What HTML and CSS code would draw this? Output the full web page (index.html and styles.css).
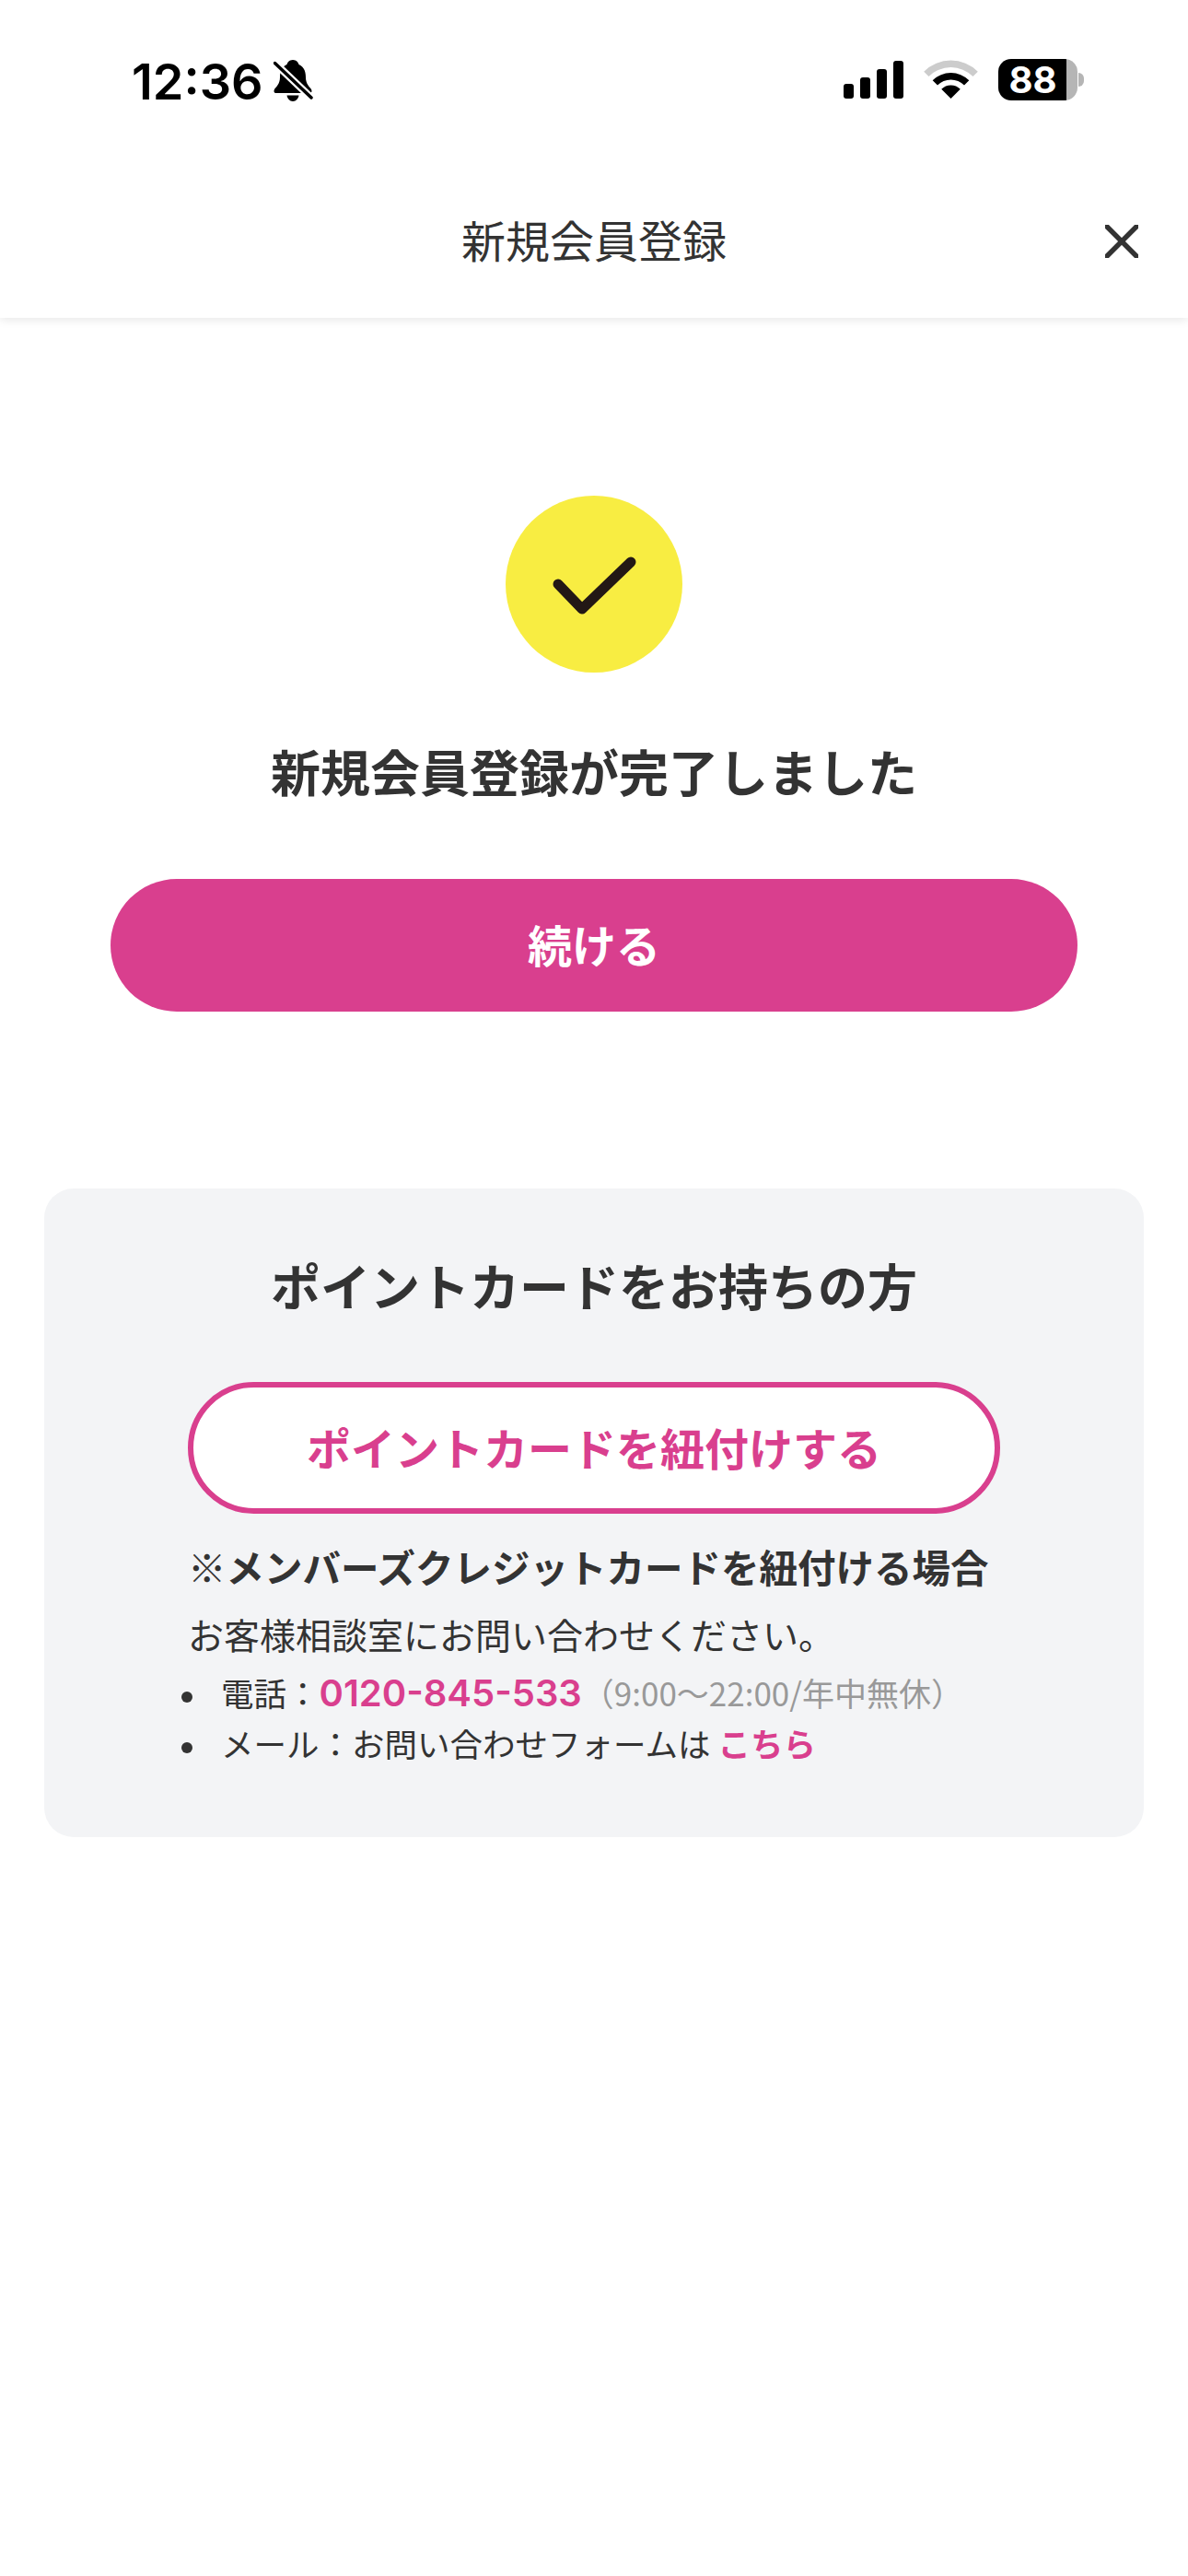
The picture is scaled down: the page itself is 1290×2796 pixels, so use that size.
FILE: index.html
```html
<!DOCTYPE html>
<html lang="ja">
<head>
    <meta charset="UTF-8">
    <meta name="viewport" content="width=device-width, initial-scale=1.0">
    <title>新規会員登録</title>
    <link rel="stylesheet" href="styles.css">
</head>
<body>
    <header class="header">
        <div class="status-bar">
            <div class="status-left">
                <span class="clock">12:36</span>
                <svg class="bell" width="43" height="46" viewBox="0 0 43 46">
                    <path d="M21 0C17 0 15 3 14.5 5C8 8 7 14 7 19C7 26 3 29 1 32C0 34 .5 36 3 36L39 36C41.5 36 42 34 41 32C39 29 35 26 35 19C35 14 34 8 27.5 5C27 3 25 0 21 0Z"/>
                    <path d="M14.5 38.5H27.5C27 42 24.5 45 21 45C17.5 45 15 42 14.5 38.5Z"/>
                    <path d="M1 3L41 41" stroke="#fff" stroke-width="8"/>
                    <path d="M1.5 3.5L41 41" stroke="#000" stroke-width="3.5" stroke-linecap="round"/>
                </svg>
            </div>
            <div class="status-right">
                <div class="signal">
                    <span class="bar bar-1"></span>
                    <span class="bar bar-2"></span>
                    <span class="bar bar-3"></span>
                    <span class="bar bar-4"></span>
                </div>
                <svg class="wifi" width="57" height="42" viewBox="0 0 57 42">
                    <path fill="#ccc" d="M-.8 12.7A41.5 41.5 0 0 1 57.8 12.7L52.5 18A34 34 0 0 0 4.5 18Z"/>
                    <path d="M8.7 22.2A28 28 0 0 1 48.3 22.2L43 27.5A20.5 20.5 0 0 0 14 27.5Z"/>
                    <path d="M18.25 31.75A14.5 14.5 0 0 1 38.75 31.75L28.5 42Z"/>
                </svg>
                <div class="battery">
                    <div class="battery-body">88</div>
                    <div class="battery-tip"></div>
                </div>
            </div>
        </div>
        <div class="nav">
            <span></span>
            <h1 class="nav-title">新規会員登録</h1>
            <svg class="close" width="36" height="36" viewBox="0 0 36 36">
                <path d="M2 2L34 34M34 2L2 34" stroke="#333" stroke-width="5.5" stroke-linecap="round"/>
            </svg>
        </div>
    </header>

    <main class="main">
        <section class="done">
            <div class="check-circle">
                <svg width="96" height="70" viewBox="0 0 96 70">
                    <path d="M9 35L35 62L88 11" fill="none" stroke="#231815" stroke-width="11" stroke-linecap="round" stroke-linejoin="round"/>
                </svg>
            </div>
            <h2 class="done-title">新規会員登録が完了しました</h2>
            <a class="btn-primary">続ける</a>
        </section>

        <section class="card">
            <h2 class="card-title">ポイントカードをお持ちの方</h2>
            <a class="btn-outline">ポイントカードを紐付けする</a>
            <div class="note">
                <p class="note-title">※メンバーズクレジットカードを紐付ける場合</p>
                <p class="note-text">お客様相談室にお問い合わせください。</p>
                <ul class="note-list">
                    <li>電話：<a class="link tel">0120-845-533</a><span class="hours">（9:00〜22:00/年中無休）</span></li>
                    <li>メール：お問い合わせフォームは <a class="link">こちら</a></li>
                </ul>
            </div>
        </section>
    </main>
</body>
</html>
```

FILE: styles.css
```css
* {
    box-sizing: border-box;
}

html, body {
    margin: 0;
    padding: 0;
}

body {
    height: 2796px;
    background: #fff;
    color: #333;
    font-family: "Noto Sans CJK JP", "Noto Sans", sans-serif;
}

h1, h2, p, ul {
    margin: 0;
    padding: 0;
}

.header {
    height: 345px;
    background: #fff;
    box-shadow: 0 2px 10px rgba(0, 0, 0, 0.1);
}

.status-bar {
    height: 172px;
    padding: 64px 113px 0 143px;
    display: flex;
    justify-content: space-between;
    align-items: flex-start;
    color: #000;
}

.status-left {
    display: flex;
    align-items: flex-start;
    gap: 11px;
}

.clock {
    font-family: Inter, sans-serif;
    font-size: 54px;
    font-weight: 600;
    line-height: 50px;
}

.bell {
    margin-top: 1px;
}

.status-right {
    display: flex;
    align-items: flex-start;
    gap: 23px;
}

.signal {
    display: flex;
    align-items: flex-end;
    gap: 7px;
    height: 43px;
}

.bar {
    width: 11px;
    background: #000;
    border-radius: 3px;
}

.bar-1 { height: 16px; }
.bar-2 { height: 23px; }
.bar-3 { height: 32px; }
.bar-4 { height: 41px; }

.wifi {
    margin-top: 1px;
    overflow: visible;
}

.battery {
    display: flex;
    align-items: center;
    height: 45px;
}

.battery-body {
    width: 86px;
    height: 45px;
    border-radius: 14px;
    background: linear-gradient(90deg, #000 86%, #b5b5b5 86%);
    color: #fff;
    font-family: Inter, sans-serif;
    font-size: 40px;
    font-weight: 700;
    line-height: 45px;
    padding-right: 11px;
    text-align: center;
}

.battery-tip {
    width: 6px;
    height: 15px;
    margin-left: 1px;
    background: #b5b5b5;
    border-radius: 0 8px 8px 0;
}

.nav {
    display: grid;
    grid-template-columns: 1fr auto 1fr;
    align-items: center;
    height: 173px;
    padding: 0 54px;
}

.nav-title {
    font-size: 48px;
    font-weight: 400;
    line-height: 70px;
}

.close {
    justify-self: end;
    margin-top: 6px;
}

.main {
    padding: 193px 48px 0;
}

.done {
    display: flex;
    flex-direction: column;
    align-items: center;
}

.check-circle {
    width: 192px;
    height: 192px;
    border-radius: 50%;
    background: #f8ed42;
    display: flex;
    justify-content: center;
    align-items: center;
}

.done-title {
    margin-top: 71px;
    font-size: 54px;
    font-weight: 700;
    line-height: 72px;
}

.btn-primary {
    margin-top: 81px;
    width: 1050px;
    height: 144px;
    padding-bottom: 5px;
    border-radius: 72px;
    background: #d93f8e;
    color: #fff;
    font-size: 48px;
    font-weight: 700;
    display: flex;
    justify-content: center;
    align-items: center;
}

.card {
    margin-top: 192px;
    height: 704px;
    border-radius: 32px;
    background: #f3f4f6;
    padding: 69px 156px 0;
}

.card-title {
    font-size: 54px;
    font-weight: 700;
    line-height: 72px;
    text-align: center;
}

.btn-outline {
    margin-top: 69px;
    height: 143px;
    padding-bottom: 4px;
    border: 6px solid #d93f8e;
    border-radius: 72px;
    background: #fff;
    color: #d93f8e;
    font-size: 48px;
    font-weight: 700;
    display: flex;
    justify-content: center;
    align-items: center;
}

.note {
    margin-top: 28px;
}

.note-title {
    font-size: 41.5px;
    font-weight: 700;
    line-height: 58px;
}

.note-text {
    margin-top: 14px;
    font-size: 39px;
    line-height: 60px;
}

.note-list {
    margin-top: 7px;
    padding-left: 36px;
    font-size: 35.5px;
    line-height: 54px;
    list-style: none;
}

.note-list li::before {
    content: "";
    display: inline-block;
    width: 12px;
    height: 12px;
    margin-left: -43px;
    margin-right: 31px;
    border-radius: 50%;
    background: #333;
    vertical-align: middle;
}

.link {
    color: #d93f8e;
    font-weight: 700;
}

.tel {
    font-family: Inter, "Noto Sans CJK JP", sans-serif;
    font-size: 40px;
    font-weight: 600;
}

.hours {
    color: #999;
    font-size: 35px;
}
```
